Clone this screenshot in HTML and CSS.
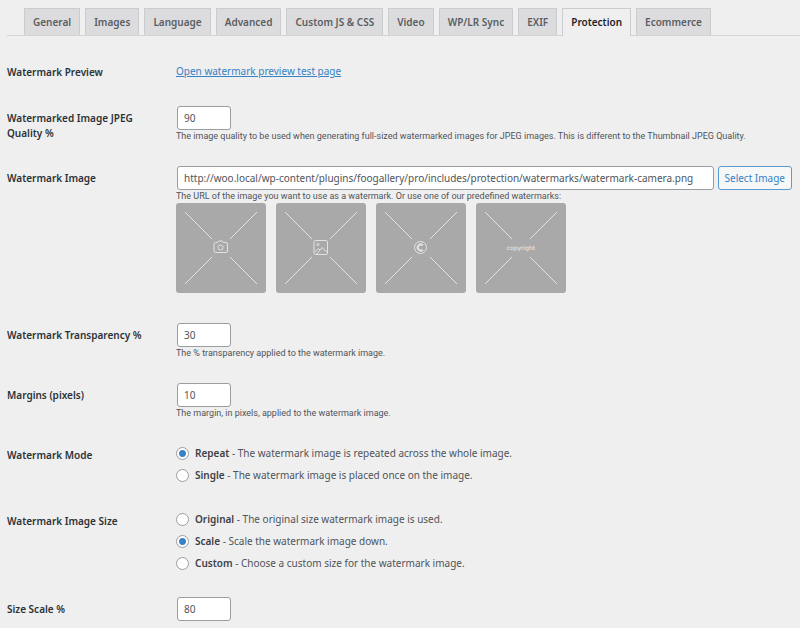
FILE: index.html
```html
<!DOCTYPE html>
<html lang="en">
<head>
<meta charset="utf-8">
<meta name="viewport" content="width=device-width, initial-scale=1">
<title>Settings - Protection</title>
<link rel="stylesheet" href="styles.css">
</head>
<body>
<nav class="tabs" aria-label="Settings sections">
  <a class="tab" href="#general">General</a>
  <a class="tab" href="#images">Images</a>
  <a class="tab" href="#language">Language</a>
  <a class="tab" href="#advanced">Advanced</a>
  <a class="tab" href="#custom">Custom JS &amp; CSS</a>
  <a class="tab" href="#video">Video</a>
  <a class="tab" href="#sync">WP/LR Sync</a>
  <a class="tab" href="#exif">EXIF</a>
  <a class="tab tab-active" href="#protection" aria-current="page">Protection</a>
  <a class="tab" href="#ecommerce">Ecommerce</a>
</nav>
<form class="settings">
  <div class="row">
    <div class="label">Watermark Preview</div>
    <div class="field"><a class="link" href="#preview">Open watermark preview test page</a></div>
  </div>
  <div class="row">
    <label class="label" for="quality">Watermarked Image JPEG Quality %</label>
    <div class="field">
      <input class="input input-small" id="quality" type="text" value="90">
      <p class="hint">The image quality to be used when generating full-sized watermarked images for JPEG images. This is different to the Thumbnail JPEG Quality.</p>
    </div>
  </div>
  <div class="row">
    <label class="label" for="image">Watermark Image</label>
    <div class="field">
      <div class="picker">
        <input class="input input-url" id="image" type="text" value="http://woo.local/wp-content/plugins/foogallery/pro/includes/protection/watermarks/watermark-camera.png">
        <button class="button" type="button">Select Image</button>
      </div>
      <p class="hint">The URL of the image you want to use as a watermark. Or use one of our predefined watermarks:</p>
      <div class="thumbs">
        <button class="thumb" type="button" aria-label="Camera">
          <svg viewBox="0 0 90 90" aria-hidden="true">
            <path d="M9 9 36 36M81 9 54 36M9 81 36 54M81 81 54 54"/>
            <path d="M39.500 39.500h2l1-1.500h4l1 1.500h2.500q1.500 0 1.500 1.500v7q0 1.500-1.500 1.500h-10.500q-1.500 0-1.500-1.500v-7q0-1.500 1.500-1.500z"/>
            <circle cx="44.500" cy="44.500" r="2.500"/>
          </svg>
        </button>
        <button class="thumb" type="button" aria-label="Picture">
          <svg viewBox="0 0 90 90" aria-hidden="true">
            <path d="M9 9 36 36M81 9 54 36M9 81 36 54M81 81 54 54"/>
            <rect x="38" y="37.500" width="13.500" height="14" rx="1.500"/>
            <circle cx="42" cy="41.500" r="1"/>
            <path d="M40.500 51.500l5.500-7 5.500 5M39 49l3-3.500 2 1.500"/>
          </svg>
        </button>
        <button class="thumb" type="button" aria-label="Copyright symbol">
          <svg viewBox="0 0 90 90" aria-hidden="true">
            <path d="M9 9 36 36M81 9 54 36M9 81 36 54M81 81 54 54"/>
            <circle cx="44.500" cy="44.500" r="6"/>
            <path class="bold" d="M46.800 42.300a3 3 0 1 0 0 4.400"/>
          </svg>
        </button>
        <button class="thumb" type="button">
          <svg viewBox="0 0 90 90" aria-hidden="true">
            <path d="M9 9 36 36M81 9 54 36M9 81 36 54M81 81 54 54"/>
          </svg>
          <span class="thumb-text">copyright</span>
        </button>
      </div>
    </div>
  </div>
  <div class="row">
    <label class="label" for="transparency">Watermark Transparency %</label>
    <div class="field">
      <input class="input input-small" id="transparency" type="text" value="30">
      <p class="hint">The % transparency applied to the watermark image.</p>
    </div>
  </div>
  <div class="row">
    <label class="label" for="margins">Margins (pixels)</label>
    <div class="field">
      <input class="input input-small" id="margins" type="text" value="10">
      <p class="hint">The margin, in pixels, applied to the watermark image.</p>
    </div>
  </div>
  <div class="row">
    <div class="label" id="mode-label">Watermark Mode</div>
    <div class="field field-radios" role="radiogroup" aria-labelledby="mode-label">
      <label class="option"><input class="radio" type="radio" name="mode" checked><span><b>Repeat</b> - The watermark image is repeated across the whole image.</span></label>
      <label class="option"><input class="radio" type="radio" name="mode"><span><b>Single</b> - The watermark image is placed once on the image.</span></label>
    </div>
  </div>
  <div class="row">
    <div class="label" id="size-label">Watermark Image Size</div>
    <div class="field field-radios" role="radiogroup" aria-labelledby="size-label">
      <label class="option"><input class="radio" type="radio" name="size"><span><b>Original</b> - The original size watermark image is used.</span></label>
      <label class="option"><input class="radio" type="radio" name="size" checked><span><b>Scale</b> - Scale the watermark image down.</span></label>
      <label class="option"><input class="radio" type="radio" name="size"><span><b>Custom</b> - Choose a custom size for the watermark image.</span></label>
    </div>
  </div>
  <div class="row">
    <label class="label" for="scale">Size Scale %</label>
    <div class="field"><input class="input input-small" id="scale" type="text" value="80"></div>
  </div>
</form>
</body>
</html>
```
FILE: styles.css
```css
* {
  box-sizing: border-box;
}

body {
  margin: 0;
  background: #efefef;
  color: #50545a;
  font-family: "Noto Sans", sans-serif;
  font-size: 10px;
  line-height: 15px;
}

.tabs {
  display: flex;
  gap: 5px;
  margin-left: 7px;
  padding: 8px 0 0 17px;
  border-bottom: 1px solid #d3d4d6;
}

.tab {
  padding: 6px 8px 5px;
  border: 1px solid #cbccce;
  border-bottom: 0;
  background: #dcdcde;
  color: #5a5e63;
  font-weight: 600;
  text-decoration: none;
  white-space: nowrap;
}

.tab-active {
  margin-bottom: -1px;
  background: #efefef;
  color: #1d2327;
}

.settings {
  padding: 12px 8px 0 7px;
}

.row {
  display: grid;
  grid-template-columns: 169px 1fr;
}

.label {
  padding: 17px 30px 0 0;
  color: #2c3237;
  font-weight: 600;
}

.field {
  min-width: 0;
  padding: 12px 0 11px;
}

.field-radios {
  padding: 11px 0;
}

.link {
  display: block;
  color: #3582c4;
  line-height: 23px;
}

.input {
  display: block;
  height: 24px;
  margin: 0 0 0 1px;
  padding: 0 6px;
  border: 1px solid #9a9da1;
  border-radius: 3px;
  background: #fff;
  color: #50545a;
  font: inherit;
}

.input-small {
  width: 54px;
}

.input-url {
  flex: 1;
  min-width: 0;
}

.picker {
  display: flex;
  gap: 4px;
}

.button {
  height: 24px;
  padding: 0 6px;
  border: 1px solid #5b9bcf;
  border-radius: 3px;
  background: #f6f7f7;
  color: #3582c4;
  font: inherit;
}

.hint {
  margin: 0;
  font-family: Roboto, sans-serif;
  font-size: 9px;
  line-height: 13px;
}

.thumbs {
  display: flex;
  flex-wrap: wrap;
  gap: 10px;
  margin-bottom: 7px;
}

.thumb {
  display: grid;
  place-items: center;
  width: 90px;
  height: 90px;
  padding: 0;
  border: 0;
  border-radius: 3px;
  background: #a9a9a9;
}

.thumb > * {
  grid-area: 1 / 1;
}

.thumb svg {
  width: 100%;
  height: 100%;
  fill: none;
  stroke: #e2e2e2;
  stroke-width: 1;
}

.thumb .bold {
  stroke-width: 2;
}

.thumb-text {
  color: #eeeeee;
  font: 400 6px/10px "DejaVu Sans", sans-serif;
}

.option {
  display: flex;
  align-items: center;
  gap: 6px;
  height: 22px;
}

.option b {
  font-weight: 600;
  color: #3c4147;
}

.radio {
  appearance: none;
  width: 13px;
  height: 13px;
  margin: 0;
  border: 1px solid #9a9da1;
  border-radius: 50%;
  background: #fff;
}

.radio:checked {
  background: radial-gradient(circle, #3582c4 3px, #fff 4px);
}
```
